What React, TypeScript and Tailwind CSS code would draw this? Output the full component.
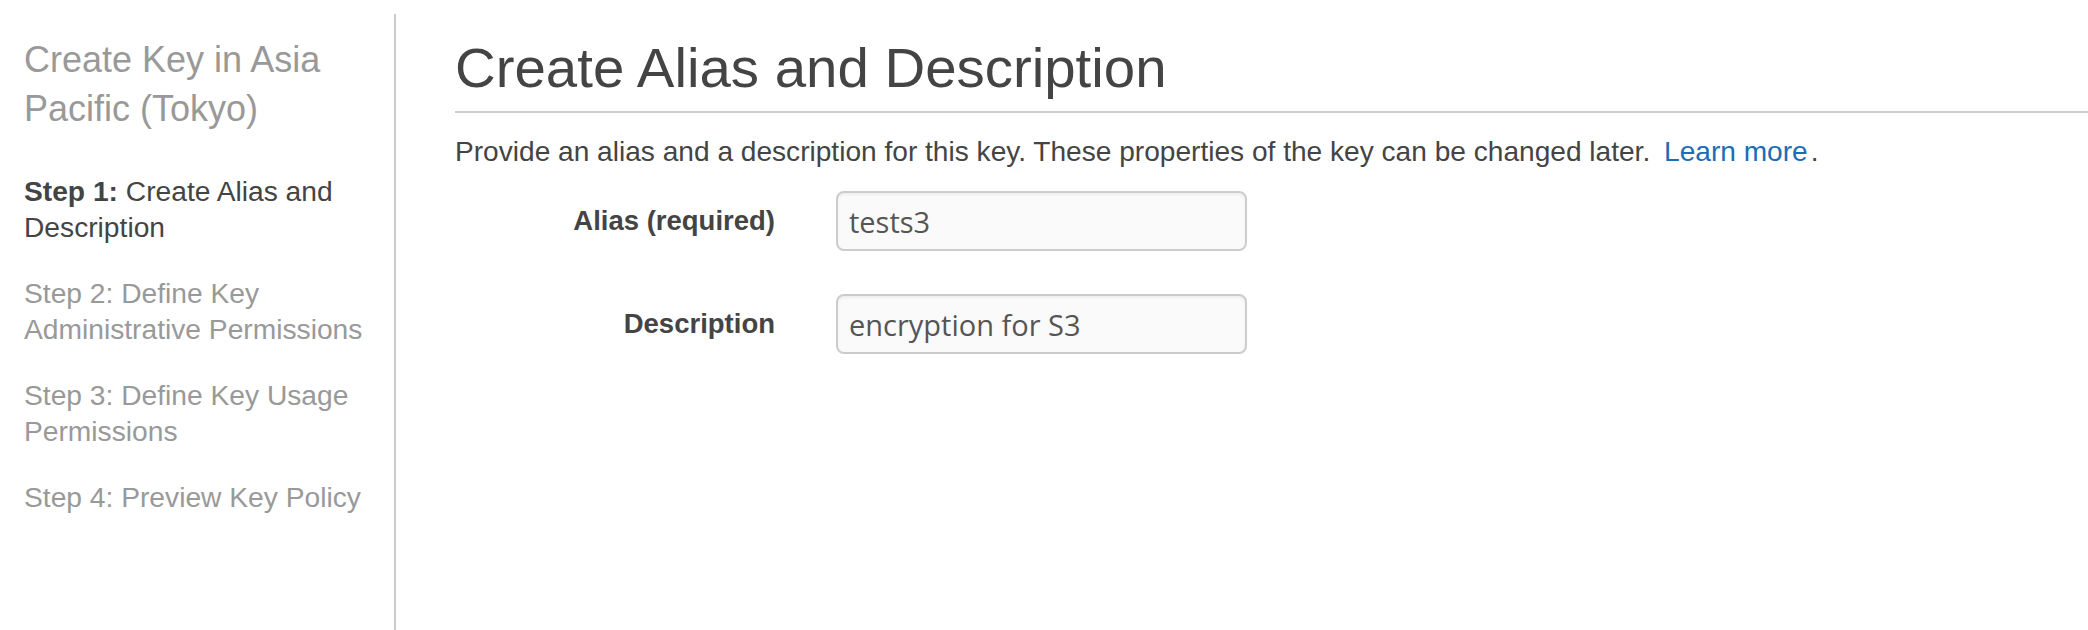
import React from "react";

const steps = [
  { label: "Step 2:", text: "Define Key Administrative Permissions" },
  { label: "Step 3:", text: "Define Key Usage Permissions" },
  { label: "Step 4:", text: "Preview Key Policy" },
];

function Field({ label, value }: { label: string; value: string }) {
  return (
    <div className="flex items-center">
      <label className="w-[320px] shrink-0 text-right text-[27.5px] font-bold text-[#444444]">
        {label}
      </label>
      <input
        readOnly
        defaultValue={value}
        className="ml-[61px] h-[60px] w-[411px] rounded-[8px] border-2 border-[#cccccc] bg-[#fafafa] px-[11px] font-['Open_Sans',sans-serif] text-[29px] text-[#555555] shadow-[inset_0_2px_3px_rgba(0,0,0,0.05)] outline-none"
      />
    </div>
  );
}

export default function App() {
  return (
    <div className="flex h-[630px] w-full overflow-hidden bg-white font-['Liberation_Sans',Arial,sans-serif]">
      <aside className="mt-[14px] w-[396px] shrink-0 border-r-2 border-[#cccccc] pl-[24px] pr-[16px] pt-[21px]">
        <h2 className="text-[36px] font-normal leading-[49px] text-[#999999]">
          Create Key in Asia Pacific (Tokyo)
        </h2>
        <ul className="mt-[40px] flex flex-col gap-[30px] text-[28.2px] leading-[36px]">
          <li className="text-[#444444]">
            <span className="font-bold">Step 1:</span> Create Alias and
            Description
          </li>
          {steps.map((s) => (
            <li key={s.label} className="text-[#999999]">
              {s.label} {s.text}
            </li>
          ))}
        </ul>
      </aside>

      <main className="flex-1 pl-[59px] pt-[36px]">
        <h1 className="text-[56.4px] font-normal leading-[64px] text-[#444444]">
          Create Alias and Description
        </h1>
        <div className="mt-[11px] h-[2px] bg-[#cccccc]" />
        <p className="mt-[21px] text-[28.1px] leading-[36px] text-[#444444]">
          Provide an alias and a description for this key. These properties of
          the key can be changed later.{" "}
          <a href="#" className="ml-[6px] text-[#1b6db5]">
            Learn more
          </a>
          <span className="ml-[3px]">.</span>
        </p>

        <div className="mt-[21px] flex flex-col gap-[43px]">
          <Field label="Alias (required)" value="tests3" />
          <Field label="Description" value="encryption for S3" />
        </div>
      </main>
    </div>
  );
}
